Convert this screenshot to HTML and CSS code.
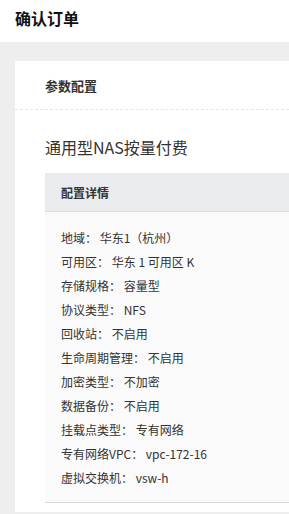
FILE: index.html
```html
<!DOCTYPE html>
<html lang="zh-CN">
<head>
<meta charset="utf-8">
<link rel="stylesheet" href="styles.css">
</head>
<body>
<header class="top">确认订单</header>
<main class="page">
  <section class="card">
    <h2 class="card-title">参数配置</h2>
    <div class="card-body">
      <h3 class="product">通用型NAS按量付费</h3>
      <div class="detail">
        <div class="detail-head">配置详情</div>
        <ul class="detail-list">
          <li>地域： 华东1（杭州）</li>
          <li>可用区： 华东 1 可用区 K</li>
          <li>存储规格： 容量型</li>
          <li>协议类型： NFS</li>
          <li>回收站： 不启用</li>
          <li>生命周期管理： 不启用</li>
          <li>加密类型： 不加密</li>
          <li>数据备份： 不启用</li>
          <li>挂载点类型： 专有网络</li>
          <li>专有网络VPC： vpc-172-16</li>
          <li>虚拟交换机： vsw-h</li>
        </ul>
      </div>
    </div>
  </section>
</main>
</body>
</html>
```

FILE: styles.css
```css
* { box-sizing: border-box; }
html, body { margin: 0; padding: 0; }
body {
  font-family: "Noto Sans CJK SC", "Noto Sans", sans-serif;
  color: #333;
  background: #eeeeee;
  overflow: hidden;
}
.top {
  height: 42px;
  background: #fff;
  font-size: 16px;
  font-weight: 700;
  color: #111;
  padding: 6px 0 0 15px;
  line-height: 24px;
}
.page {
  padding: 19px 0 0 15px;
  height: 472px;
}
.card {
  background: #fff;
  height: 451px;
}
.card-title {
  margin: 0;
  height: 49px;
  padding: 15px 0 0 30px;
  font-size: 13px;
  font-weight: 700;
  line-height: 20px;
  border-bottom: 1px dashed #e5e5e5;
}
.card-body {
  padding: 25px 0 0 30px;
}
.product {
  margin: 0;
  font-size: 16px;
  font-weight: 400;
  line-height: 24px;
  color: #333;
}
.detail {
  margin-top: 14px;
  background: #fafafa;
  border-bottom: 1px solid #d9d9d9;
}
.detail-head {
  height: 39px;
  background: #e9ebef;
  border-bottom: 1px solid #dcdfe4;
  padding: 10px 0 0 16px;
  font-size: 12px;
  font-weight: 700;
  line-height: 20px;
}
.detail-list {
  list-style: none;
  margin: 0;
  padding: 14px 0 12px 16px;
  font-size: 12px;
  line-height: 24px;
  color: #333;
}
```
